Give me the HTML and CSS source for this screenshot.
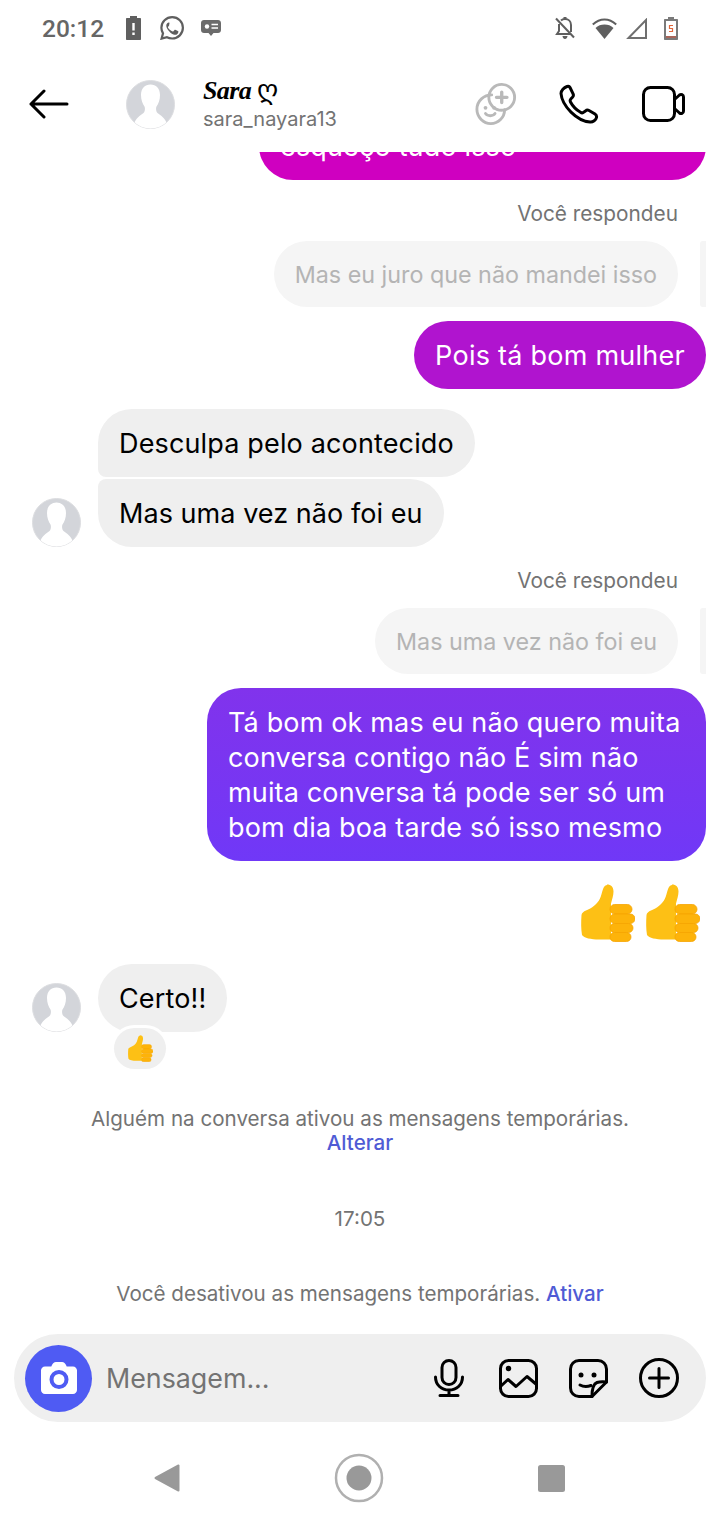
FILE: index.html
```html
<!DOCTYPE html>
<html>
	<head>
		<meta charset="utf-8">
		<title>Sara</title>
		<link rel="stylesheet" href="styles.css">
	</head>
	<body>
		<svg class="defs" width="0" height="0">
			<defs>
				<symbol id="avatar" viewBox="0 0 49 49">
					<clipPath id="avatarClip"><circle cx="24.5" cy="24.5" r="24"/></clipPath>
					<circle cx="24.5" cy="24.5" r="24" fill="#d3d5da" stroke="#dcdde0" stroke-width="1"/>
					<path clip-path="url(#avatarClip)" fill="#fff" d="M24.5 4.500c-5.500 0-9.500 4-9.500 10.500 0 5 1.500 8.500 3.500 11.500.8 1.500.5 5-1 6.500C14 36 10 37.500 8 44l3 6h27l3-6c-2-6.500-6-8-9.500-11-1.500-1.500-1.800-5-1-6.500 2-3 3.500-6.500 3.500-11.500 0-6.500-4-10.500-9.500-10.500z"/>
				</symbol>
				<symbol id="thumb" viewBox="0 0 54 58" preserveAspectRatio="none">
					<path fill="#fdc015" d="M26 .5c4 0 6.500 2.500 6.500 7 0 4-1.500 8-2.500 12v36H18C10 55.500 3 54 1 51c-1-6-1-13-.5-20 .3-2 2-3.500 4.500-4.500 6-2.500 11-6 14-12 2.500-5 2.500-13.500 7-13.500z"/>
					<g fill="#fdb30a" stroke="#f6a500" stroke-width=".8">
						<rect x="29" y="20.500" width="22" height="9.500" rx="4.700"/>
						<rect x="29" y="30" width="25" height="9.500" rx="4.700"/>
						<rect x="29" y="39.500" width="23" height="9" rx="4.500"/>
						<rect x="29" y="48.500" width="21" height="9" rx="4.500"/>
					</g>
				</symbol>
			</defs>
		</svg>

		<div class="status">
			<span class="clock">20:12</span>
			<svg class="stat-batt" width="15" height="24" viewBox="0 0 15 24"><path fill="#5f5f5f" d="M4 0h7v2h3c.6 0 1 .4 1 1v20c0 .6-.4 1-1 1H1c-.6 0-1-.4-1-1V3c0-.6.4-1 1-1h3z"/><path fill="#fff" d="M6.300 7h2.400v7.500H6.300zM6.300 16.500h2.400V19H6.300z"/></svg>
			<svg class="stat-wa" width="24" height="24" viewBox="0 0 24 24"><path fill="none" stroke="#5f5f5f" stroke-width="2.200" d="M12.200 1.200C6.200 1.200 1.400 6 1.400 11.800c0 2 .6 3.900 1.600 5.600L1.600 22.600l5.300-1.400c1.600.9 3.400 1.300 5.300 1.300 6 0 10.700-4.800 10.700-10.700S18.200 1.200 12.200 1.200z"/><path fill="#5f5f5f" d="M8.700 6.500c-.4 0-1 .2-1.400.7-.5.5-1.400 1.400-1.400 3.300 0 2 1.400 3.900 1.700 4.200.2.300 2.800 4.300 6.700 5.800 3.300 1.300 4-.2 4.700-.8.800-.7 1-1.800 1-2.500-.1-.3-.3-.4-.6-.6l-3-1.500c-.4-.1-.7-.2-.9.200l-1.300 1.600c-.2.300-.5.300-.9.100-.4-.2-1.700-.6-3.200-2-1.200-1-2-2.300-2.200-2.700-.2-.4 0-.6.200-.8l.9-1.100c.2-.2.200-.4.300-.7.100-.2 0-.5 0-.7L9.700 7.200c-.3-.7-.6-.7-1-.7z" transform="translate(1.200 .8) scale(.86)"/></svg>
			<svg class="stat-msg" width="20" height="16" viewBox="0 0 20 16"><path fill="#6b6b6b" d="M3 0h14c1.700 0 3 1.300 3 3v7c0 1.700-1.300 3-3 3h-4.500L10 16l-2.500-3H3c-1.700 0-3-1.300-3-3V3c0-1.700 1.300-3 3-3z"/><circle cx="6" cy="6.500" r="2.200" fill="#fff"/><path stroke="#fff" stroke-width="1.500" d="M10.500 4.500H17M10.500 8H17"/></svg>
			<span class="grow"></span>
			<svg class="stat-bell" width="20" height="22" viewBox="0 0 20 22"><path fill="none" stroke="#5f5f5f" stroke-width="2" d="M4 7v7l-2 3h13M6 3.500C7 2.500 8.500 2 10 2c3.500 0 6 2.500 6 6v7"/><path fill="#5f5f5f" d="M8.500 0h3v2.500h-3zM7.500 19h5c0 1.500-1 3-2.500 3s-2.500-1.500-2.500-3z"/><path stroke="#5f5f5f" stroke-width="2" d="M1 1.500l18 19"/></svg>
			<svg class="stat-wifi" width="25" height="21" viewBox="0 0 25 21"><path fill="#5f5f5f" d="M12.500 21L3.500 10C6 7.500 9 6.500 12.500 6.500s6.500 1 9 3.500z"/><path fill="none" stroke="#5f5f5f" stroke-width="2" d="M.8 6.500C4 3.500 8 1.500 12.500 1.500s8.500 2 11.700 5"/></svg>
			<svg class="stat-signal" width="21" height="21" viewBox="0 0 21 21"><path fill="none" stroke="#6f6f6f" stroke-width="2" d="M2.500 20L20 2v18z"/></svg>
			<svg class="stat-power" width="14" height="23" viewBox="0 0 14 23"><path fill="#7a7a7a" d="M4 0h6v2h3c.6 0 1 .4 1 1v19c0 .6-.4 1-1 1H1c-.6 0-1-.4-1-1V3c0-.6.4-1 1-1h3z"/><path fill="#fff" d="M2 4h10v15H2z"/><path fill="#a8655a" d="M2 19h10v2H2z"/><path fill="none" stroke="#e0663c" stroke-width="1.200" d="M9 8.500H5.500V11.500H8.500V14.500H5"/></svg>
		</div>

		<div class="head">
			<svg class="back" width="40" height="30" viewBox="0 0 40 30"><path fill="none" stroke="#000" stroke-width="3" stroke-linecap="round" stroke-linejoin="round" d="M38 15H2M15 2L2 15l13 13"/></svg>
			<svg class="avatar head-avatar" width="49" height="49"><use href="#avatar"/></svg>
			<div class="who">
				<div class="name">Sara <span class="heart">ღ</span></div>
				<div class="user">sara_nayara13</div>
			</div>
			<span class="grow"></span>
			<svg class="ico-effects" width="42" height="42" viewBox="0 0 44 44"><g fill="none" stroke="#b9b9b9" stroke-width="3" stroke-linecap="round"><path d="M17.500 12.500c-8 0-15.500 6-15.500 15C2 36 9 42.500 16.500 42.500c8 0 14.500-6.500 14.500-14.500"/><circle cx="28" cy="15" r="13.500"/><path d="M28 9.500v11M22.500 15h11" stroke-width="3.500"/><path d="M11 32c2 3 8 3 10 0"/></g><circle cx="11" cy="26" r="2" fill="#b9b9b9"/><circle cx="20" cy="26" r="2" fill="#b9b9b9"/></svg>
			<svg class="ico-phone" width="40" height="40" viewBox="0 0 40 40"><path fill="none" stroke="#000" stroke-width="3" stroke-linejoin="round" d="M8 2.500c-3 1-6 4-6 7C3 22 18 37 31 38c3 .3 6-2 6.500-4.500.3-1.500-.2-2.700-1.500-3.500l-6-3.500c-1.200-.7-2.500-.5-3.500.5L25 28c-1 1-2.500 1-3.500.3-4-2.300-8-6.500-10-10.300-.5-1-.4-2.400.5-3.300l1.500-1.500c1-1 1.100-2.200.6-3.400L11 3.500C10.500 2.500 9.200 2.100 8 2.500z"/></svg>
			<svg class="ico-video" width="43" height="36" viewBox="0 0 43 36"><g fill="none" stroke="#000" stroke-width="3" stroke-linejoin="round"><rect x="1.500" y="1.500" width="31" height="33" rx="7"/><path d="M32.500 13.500l5-4.500c1.500-1.200 4-.5 4 2v14c0 2.500-2.500 3.200-4 2l-5-4.500z"/></g></svg>
		</div>

		<div class="chat">
			<div class="bubble mine pink">esqueço tudo isso</div>

			<div class="replied">Você respondeu</div>
			<div class="quote">
				<div class="quote-text">Mas eu juro que não mandei isso</div>
				<span class="quote-bar"></span>
			</div>
			<div class="bubble mine purple">Pois tá bom mulher</div>

			<div class="theirs first">
				<div class="bubble gray top">Desculpa pelo acontecido</div>
			</div>
			<div class="theirs second">
				<svg class="avatar" width="49" height="49"><use href="#avatar"/></svg>
				<div class="bubble gray bottom">Mas uma vez não foi eu</div>
			</div>

			<div class="replied second-reply">Você respondeu</div>
			<div class="quote">
				<div class="quote-text">Mas uma vez não foi eu</div>
				<span class="quote-bar"></span>
			</div>
			<div class="bubble mine violet">Tá bom ok mas eu não quero muita conversa contigo não É sim não muita conversa tá pode ser só um bom dia boa tarde só isso mesmo</div>

			<div class="thumbs">
				<svg width="54" height="58"><use href="#thumb"/></svg>
				<svg width="54" height="58"><use href="#thumb"/></svg>
			</div>

			<div class="theirs certo">
				<svg class="avatar" width="49" height="49"><use href="#avatar"/></svg>
				<div class="bubble gray">Certo!!</div>
				<div class="reaction"><svg width="25" height="27"><use href="#thumb"/></svg></div>
			</div>

			<div class="notice notice-a">Alguém na conversa ativou as mensagens temporárias.<br><a class="link">Alterar</a></div>
			<div class="notice notice-time">17:05</div>
			<div class="notice notice-b">Você desativou as mensagens temporárias. <a class="link">Ativar</a></div>
		</div>

		<div class="composer">
			<div class="cam">
				<svg width="36" height="32" viewBox="0 0 36 32"><path fill="#fff" d="M11 3c.6-1.500 2-3 4-3h6c2 0 3.400 1.500 4 3l.7 1.500H32c2.200 0 4 1.800 4 4V28c0 2.200-1.800 4-4 4H4c-2.200 0-4-1.800-4-4V8.500c0-2.200 1.800-4 4-4h6.300z"/><circle cx="18" cy="17.500" r="7.500" fill="#fff" stroke="#4f5bf3" stroke-width="4"/></svg>
			</div>
			<div class="placeholder">Mensagem...</div>
			<svg class="ico-mic" width="30" height="38" viewBox="0 0 30 38"><g fill="none" stroke="#000" stroke-width="3" stroke-linecap="round"><rect x="8" y="1.500" width="14" height="24" rx="7"/><path d="M1.500 18c0 8 6 13 13.500 13s13.500-5 13.500-13M15 31v5.500M6 36.500h18"/></g></svg>
			<svg class="ico-pic" width="39" height="39" viewBox="0 0 39 39"><g fill="none" stroke="#000" stroke-width="3" stroke-linejoin="round"><rect x="1.500" y="1.500" width="36" height="36" rx="8"/><path d="M2 27l7-6.500 8 7 11-10 9.500 8"/></g><circle cx="9.500" cy="9.500" r="2.700" fill="#000"/></svg>
			<svg class="ico-sticker" width="39" height="39" viewBox="0 0 39 39"><g fill="none" stroke="#000" stroke-width="3" stroke-linejoin="round" stroke-linecap="round"><path d="M23 37.500H10c-4.800 0-8.500-3.700-8.500-8.500V10c0-4.800 3.700-8.500 8.500-8.500h19c4.800 0 8.500 3.700 8.500 8.500v13z"/><path d="M23 37.500c0-8 1-12.500 5-14 3-1 6-1 9.500-.5"/><path d="M11 26c3.500 2 7 2 11 .5"/></g><circle cx="12" cy="16" r="2.500"/><circle cx="25" cy="16" r="2.500"/></svg>
			<svg class="ico-plus" width="40" height="40" viewBox="0 0 40 40"><g fill="none" stroke="#000" stroke-width="3" stroke-linecap="round"><circle cx="20" cy="20" r="18.500"/><path d="M20 10.500v19M10.500 20h19"/></g></svg>
		</div>

		<div class="nav">
			<svg width="26" height="28" viewBox="0 0 26 28"><path fill="#999" stroke="#999" stroke-width="2" stroke-linejoin="round" d="M1.500 14L24.500 1.500v25z"/></svg>
			<svg width="50" height="50" viewBox="0 0 50 50"><circle cx="25" cy="25" r="23" fill="none" stroke="#b0b0b0" stroke-width="2.500"/><circle cx="25" cy="25" r="12.500" fill="#999"/></svg>
			<svg width="27" height="27" viewBox="0 0 27 27"><rect width="27" height="27" rx="2.500" fill="#999"/></svg>
		</div>
	</body>
</html>
```

FILE: styles.css
```css
html, body{
	margin: 0;
	padding: 0;
}
body{
	width: 720px;
	height: 1520px;
	display: flex;
	flex-direction: column;
	overflow: hidden;
	background: #fff;
	font-family: Inter, "Noto Sans", sans-serif;
	color: #000;
}
svg{
	display: block;
	flex: none;
}
.defs{
	position: absolute;
}
.grow{
	flex: 1;
}

/* status bar */
.status{
	height: 56px;
	display: flex;
	align-items: center;
	padding: 0 42px;
	box-sizing: border-box;
}
.clock{
	font-family: Roboto, sans-serif;
	font-size: 24.500px;
	font-weight: 500;
	color: #666;
	width: 84px;
}
.stat-wa{
	margin-left: 19px;
}
.stat-msg{
	margin-left: 17px;
}
.stat-bell{
	margin-right: 17px;
}
.stat-wifi{
	margin-right: 9px;
}
.stat-signal{
	margin-right: 17px;
}

/* header */
.head{
	height: 96px;
	display: flex;
	align-items: center;
	padding: 0 35px 0 29px;
	box-sizing: border-box;
	background: #fff;
}
.head-avatar{
	margin-left: 57px;
}
.who{
	margin-left: 28px;
}
.name{
	font-family: "Liberation Serif", serif;
	font-style: italic;
	font-weight: 700;
	font-size: 26px;
	line-height: 32px;
	letter-spacing: -0.6px;
	height: 30px;
}
.heart{
	font-family: "DejaVu Sans", sans-serif;
	font-style: normal;
	font-weight: 400;
	font-size: 27px;
	line-height: 20px;
}
.user{
	font-size: 20px;
	line-height: 28px;
	color: #737373;
}
.ico-phone{
	margin-left: 42px;
}
.ico-video{
	margin-left: 43px;
}

/* messages */
.chat{
	flex: 1;
	min-height: 0;
	display: flex;
	flex-direction: column;
	justify-content: flex-end;
	overflow: hidden;
	padding: 0 14px 28px 32px;
}
.bubble{
	font-size: 27px;
	letter-spacing: 0.15px;
	line-height: 35px;
	padding: 17px 21px 16px;
	border-radius: 34px;
	flex: none;
}
.mine{
	align-self: flex-end;
	color: #fff;
}
.pink{
	background: #cf00c0;
	width: 447px;
	box-sizing: border-box;
}
.purple{
	background: #b014cf;
	margin-top: 14px;
	letter-spacing: 0.25px;
}
.violet{
	background: linear-gradient(#8133ec, #7038f7);
	width: 499px;
	box-sizing: border-box;
	margin-top: 14px;
}
.gray{
	background: #efefef;
}
.top{
	border-bottom-left-radius: 8px;
}
.bottom{
	border-top-left-radius: 8px;
	letter-spacing: 0.05px;
}
.theirs{
	display: flex;
	align-items: flex-end;
	flex: none;
	position: relative;
}
.theirs .bubble{
	margin-left: 17px;
}
.first{
	margin-top: 20px;
	padding-left: 49px;
}
.second{
	margin-top: 2px;
}
.replied{
	align-self: flex-end;
	font-size: 20.800px;
	line-height: 26px;
	color: #737373;
	margin: 21px 28px 14px 0;
}
.quote{
	align-self: flex-end;
	display: flex;
	gap: 22px;
	flex: none;
}
.quote-text{
	font-size: 23.300px;
	line-height: 65px;
	padding: 1px 21px 0;
	border-radius: 33px;
	background: #f5f5f5;
	color: #b4b4b4;
}
.quote-bar{
	width: 6px;
	border-radius: 3px 0 0 3px;
	background: #f5f5f5;
}
.thumbs{
	align-self: flex-end;
	display: flex;
	gap: 11px;
	margin: 23px 6px 0 0;
	flex: none;
}
.certo{
	margin-top: 22px;
	margin-bottom: 37px;
}
.reaction{
	position: absolute;
	left: 82px;
	bottom: -37px;
	width: 52px;
	height: 41px;
	display: flex;
	align-items: center;
	justify-content: center;
	border-radius: 21px;
	background: #efefef;
	box-shadow: 0 0 0 3px #fff;
}
.notice{
	text-align: center;
	font-size: 20.600px;
	line-height: 24px;
	color: #737373;
	margin-left: -32px;
	margin-right: -14px;
	flex: none;
}
.notice-a{
	margin-top: 38px;
}
.notice-time{
	margin-top: 52px;
}
.notice-b{
	margin-top: 51px;
}
.link{
	color: #4f5bd5;
	font-weight: 500;
}

/* input */
.composer{
	height: 88px;
	margin: 0 14px;
	display: flex;
	align-items: center;
	padding: 0 27px 0 11px;
	border-radius: 44px;
	background: #efefef;
	flex: none;
}
.cam{
	width: 67px;
	height: 67px;
	border-radius: 50%;
	background: #4f5bf3;
	display: flex;
	align-items: center;
	justify-content: center;
	flex: none;
}
.placeholder{
	flex: 1;
	margin-left: 14px;
	font-size: 26.800px;
	color: #737373;
}
.ico-pic{
	margin-left: 35px;
}
.ico-sticker{
	margin-left: 31px;
}
.ico-plus{
	margin-left: 31px;
}

/* android nav */
.nav{
	height: 98px;
	display: flex;
	align-items: center;
	justify-content: space-between;
	padding: 26px 155px 12px 154px;
	box-sizing: border-box;
	flex: none;
}
```
